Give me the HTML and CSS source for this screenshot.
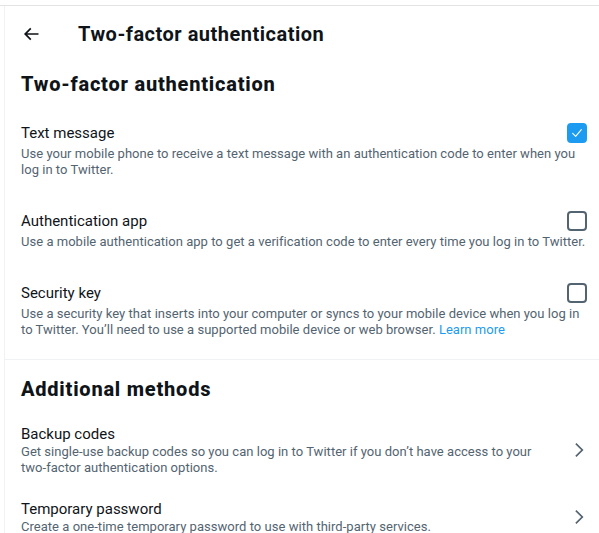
FILE: index.html
```html
<!DOCTYPE html>
<html lang="en">
<head>
<meta charset="utf-8">
<title>Two-factor authentication</title>
<link rel="stylesheet" href="styles.css">
</head>
<body>
<div class="frame">
  <main class="page">
    <header class="topbar">
      <button class="back" aria-label="Back">
        <svg viewBox="0 0 24 24" class="back-icon"><path d="M7.414 13l5.043 5.04-1.414 1.42L3.586 12l7.457-7.46 1.414 1.42L7.414 11H21v2H7.414z"/></svg>
      </button>
      <h1 class="topbar-title">Two-factor authentication</h1>
    </header>

    <section class="section section-first">
      <h2 class="section-title">Two-factor authentication</h2>

      <div class="option">
        <div class="option-head">
          <span class="option-label">Text message</span>
          <span class="checkbox checked">
            <svg viewBox="0 0 24 24" class="check-icon"><path d="M5.5 12.5l4.5 4.5 8.5-10"/></svg>
          </span>
        </div>
        <p class="option-desc">Use your mobile phone to receive a text message with an authentication code to enter when you log in to Twitter.</p>
      </div>

      <div class="option">
        <div class="option-head">
          <span class="option-label">Authentication app</span>
          <span class="checkbox"></span>
        </div>
        <p class="option-desc">Use a mobile authentication app to get a verification code to enter every time you log in to Twitter.</p>
      </div>

      <div class="option">
        <div class="option-head">
          <span class="option-label">Security key</span>
          <span class="checkbox"></span>
        </div>
        <p class="option-desc">Use a security key that inserts into your computer or syncs to your mobile device when you log in to Twitter. You’ll need to use a supported mobile device or web browser. <a href="#" class="link">Learn more</a></p>
      </div>
    </section>

    <section class="section section-second">
      <h2 class="section-title">Additional methods</h2>

      <a href="#" class="nav-row">
        <div class="nav-text">
          <span class="option-label">Backup codes</span>
          <p class="option-desc nav-desc">Get single-use backup codes so you can log in to Twitter if you don’t have access to your two-factor authentication options.</p>
        </div>
        <svg viewBox="0 0 24 24" class="chevron"><path d="M14.586 12L7.543 4.96l1.414-1.42L17.414 12l-8.457 8.46-1.414-1.42L14.586 12z"/></svg>
      </a>

      <a href="#" class="nav-row">
        <div class="nav-text">
          <span class="option-label">Temporary password</span>
          <p class="option-desc nav-desc">Create a one-time temporary password to use with third-party services.</p>
        </div>
        <svg viewBox="0 0 24 24" class="chevron"><path d="M14.586 12L7.543 4.96l1.414-1.42L17.414 12l-8.457 8.46-1.414-1.42L14.586 12z"/></svg>
      </a>
    </section>
  </main>
</div>
</body>
</html>
```
FILE: styles.css
```css
* { box-sizing: border-box; }

html, body {
  margin: 0;
  padding: 0;
  background: #ffffff;
}

body {
  font-family: Roboto, "Liberation Sans", Arial, sans-serif;
  color: #0f1419;
  overflow: hidden;
}

.frame {
  margin-top: 5px;
  border-top: 1px solid #e3e3e3;
}

.page {
  margin-left: 4px;
  border-left: 1px solid #eff3f4;
  min-height: 600px;
}

.topbar {
  display: flex;
  align-items: center;
  height: 56px;
  padding: 0 16px;
}

.back {
  display: flex;
  align-items: center;
  justify-content: flex-start;
  width: 57px;
  height: 36px;
  padding: 0;
  border: 0;
  background: none;
  flex-shrink: 0;
}

.back-icon {
  width: 20px;
  height: 20px;
  fill: #0f1419;
}

.topbar-title {
  margin: 0;
  font-size: 20px;
  line-height: 24px;
  font-weight: 700;
  letter-spacing: 0.5px;
}

.section {
  padding-right: 10px;
}

.section-first {
  padding-bottom: 4px;
  border-bottom: 1px solid #eff3f4;
}

.section-title {
  margin: 0;
  padding: 10px 0 11px 16px;
  font-size: 20px;
  line-height: 24px;
  font-weight: 800;
  letter-spacing: 0.78px;
}

.section-second .section-title {
  padding: 17px 0 12px 16px;
}

.option {
  padding: 16px 0 17px 16px;
}

.option-head {
  display: flex;
  justify-content: space-between;
  align-items: flex-start;
}

.option-label {
  display: block;
  font-size: 15px;
  line-height: 20px;
  color: #0f1419;
}

.option-desc {
  margin: 3px 0 0;
  font-size: 13px;
  line-height: 16px;
  color: #536471;
  letter-spacing: 0.03px;
}

.nav-desc {
  margin-top: 0;
}

.link {
  color: #1d9bf0;
  text-decoration: none;
}

.checkbox {
  width: 20px;
  height: 20px;
  margin-right: 2px;
  border: 2px solid #536471;
  border-radius: 4px;
  flex-shrink: 0;
  display: flex;
  align-items: center;
  justify-content: center;
}

.checkbox.checked {
  background: #1d9bf0;
  border-color: #1d9bf0;
}

.check-icon {
  width: 18px;
  height: 18px;
  fill: none;
  stroke: #ffffff;
  stroke-width: 1.6;
  stroke-linecap: round;
  stroke-linejoin: round;
}

.nav-row {
  display: flex;
  align-items: center;
  padding: 11px 0 12px 16px;
  text-decoration: none;
  color: inherit;
}

.nav-text {
  flex: 1;
  min-width: 0;
  padding-right: 28px;
}

.chevron {
  width: 20px;
  height: 20px;
  fill: #536471;
  flex-shrink: 0;
}
```
